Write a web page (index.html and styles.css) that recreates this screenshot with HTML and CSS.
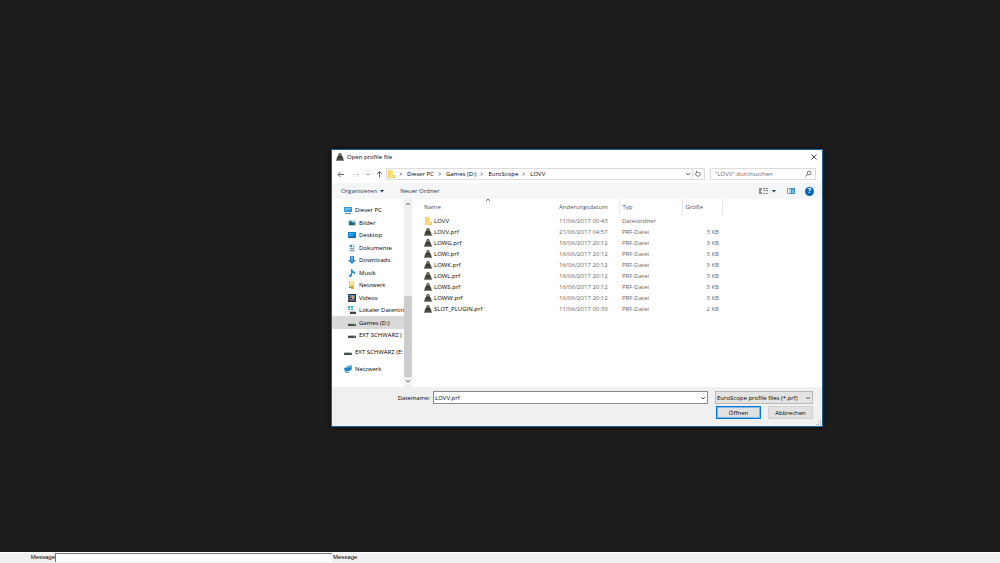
FILE: index.html
```html
<!DOCTYPE html>
<html lang="de">
<head>
<meta charset="utf-8">
<title>Open profile file</title>
<link rel="stylesheet" href="styles.css">
</head>
<body>
<svg class="defs" aria-hidden="true">
  <symbol id="tower" viewBox="0 0 8 8"><path d="M3 0h2l1 2v1l1 1 1 4H0l1-4 1-1V2z" fill="#62625a"/><path d="M3 1h2v1H3z" fill="#8e8a78"/><path d="M2 3h4v2H2z" fill="#3c3b36"/><path d="M1 5h6v2H1z" fill="#4a4a43"/><path d="M0 7h8v1H0z" fill="#8a887c"/></symbol>
  <symbol id="folder" viewBox="0 0 8 8"><path d="M1 0h5v5h1v3H1z" fill="#fbdc78"/><path d="M1 0h1v8H1z" fill="#f3cc5e"/><path d="M6 5h2v3H5z" fill="#ecc659"/><path d="M5 6h2v1H5z" fill="#fdeaa4"/></symbol>
  <symbol id="pc" viewBox="0 0 8 8"><path d="M0 1h8v5H0z" fill="#3597dc"/><path d="M1 2h6v1L1 5z" fill="#6cc3f2"/><path d="M1 7h6v1H1z" fill="#6a8ca5"/></symbol>
  <symbol id="pictures" viewBox="0 0 8 8"><path d="M0 1h8v6H0z" fill="#c8dbe7"/><path d="M1 2h6v3H1z" fill="#3a7fb5"/><path d="M1 5l2-2 2 2 1-1 1 1v1H1z" fill="#305d56"/><path d="M4 2h3v1H4z" fill="#a9dcf5"/></symbol>
  <symbol id="desk" viewBox="0 0 8 8"><path d="M0 1h8v6H0z" fill="#0c7fd6"/><path d="M1 2h6L1 6z" fill="#34a5ee"/><path d="M0 6h8v1H0z" fill="#1e5e94"/></symbol>
  <symbol id="docs" viewBox="0 0 8 8"><path d="M1 0h5l1 1v7H1z" fill="#d8e8ef"/><path d="M2 1h2v2H2z" fill="#3b91c9"/><path d="M5 2h1v1H5zM2 4h4v1H2zM2 6h4v1H2z" fill="#799dad"/></symbol>
  <symbol id="down" viewBox="0 0 8 8"><path d="M2 0h4v4h2L4 8 0 4h2z" fill="#2f83cf"/><path d="M3 0h2v5H3z" fill="#5aa9e3"/></symbol>
  <symbol id="music" viewBox="0 0 8 8"><path d="M3 0h1c0 2 3 2 3 4 0 1-1 2-1 2 0-2-1-2-2-2v2c0 2-3 3-3 1 0-1 1-2 2-2z" fill="#1594db"/></symbol>
  <symbol id="netfolder" viewBox="0 0 8 8"><path d="M1 0h5v6H1z" fill="#f6d367"/><path d="M2 0h3v4H2z" fill="#fce69c"/><path d="M1 6h5v1H1z" fill="#4c9b6a"/><path d="M3 5h3v3H3z" fill="#dfaa38"/></symbol>
  <symbol id="video" viewBox="0 0 8 8"><path d="M0 0h8v8H0z" fill="#33363d"/><path d="M2 1h5v3H2z" fill="#5489c3"/><path d="M2 5h5v2H2z" fill="#6c6386"/><path d="M4 2h2v3H4z" fill="#d09b57"/><path d="M1 1v6" stroke="#aaa" stroke-dasharray="1 1"/></symbol>
  <symbol id="windrive" viewBox="0 0 8 8"><path d="M0 0h2v2H0zM3 0h2v2H3zM0 3h2v1H0zM3 3h2v1H3z" fill="#17a8df"/><path d="M2 5h5l1 1H1z" fill="#bbb"/><path d="M2 6h6v2H2z" fill="#3e4146"/></symbol>
  <symbol id="drive" viewBox="0 0 8 8"><path d="M1 4h6l1 1H0z" fill="#bdbdbd"/><path d="M0 5h8v2H0z" fill="#4a4d4e"/><path d="M6 5h1v1H6z" fill="#73c983"/></symbol>
  <symbol id="network" viewBox="0 0 8 8"><path d="M3 1l5-1v5L4 7z" fill="#55b3e2"/><path d="M0 3l4-1v4L1 7z" fill="#2589c8"/><path d="M4 3l3-1v2L4 6z" fill="#1d78bd"/><path d="M2 7h3v1H2z" fill="#7899ab"/></symbol>
  <symbol id="chev-r" viewBox="0 0 8 8"><path d="M3 2.500L4.500 4 3 5.500" fill="none" stroke="#555" stroke-width=".9"/></symbol>
  <symbol id="chev-d" viewBox="0 0 8 8"><path d="M2 3l2 2 2-2" fill="none" stroke="#666"/></symbol>
  <symbol id="chev-u" viewBox="0 0 8 8"><path d="M2 5l2-2 2 2" fill="none" stroke="#666"/></symbol>
  <symbol id="tri" viewBox="0 0 8 8"><path d="M2 3h4L4 5.500z" fill="#1e395b"/></symbol>
</svg>
<div class="desktop">
  <main class="dialog" role="dialog" aria-labelledby="dialog-title">
    <header class="titlebar">
      <svg class="icon"><use href="#tower"/></svg>
      <h1 class="title" id="dialog-title">Open profile file</h1>
      <button class="plain close" aria-label="Schließen"><svg class="icon" viewBox="0 0 8 8"><path d="M1.500 1.500l5 5m0-5l-5 5" stroke="#222" stroke-width=".8"/></svg></button>
    </header>
    <div class="navbar">
      <button class="plain back" aria-label="Zurück"><svg class="icon" viewBox="0 0 8 8"><path d="M7 4.500H1M3.500 2L1 4.500 3.500 7" fill="none" stroke="#555" stroke-width=".9"/></svg></button>
      <button class="plain forward" aria-label="Vorwärts"><svg class="icon" viewBox="0 0 8 8"><path d="M1 4.500h6M4.500 2L7 4.500 4.500 7" fill="none" stroke="#d5d5d5" stroke-width=".9"/></svg></button>
      <button class="plain recent" aria-label="Zuletzt besucht"><svg class="icon" viewBox="0 0 8 8"><path d="M2.500 3.500L4 5l1.500-1.500" fill="none" stroke="#888"/></svg></button>
      <button class="plain up" aria-label="Nach oben"><svg class="icon" viewBox="0 0 8 8"><path d="M4.500 7.500V1.500M2 4l2.500-2.500L7 4" fill="none" stroke="#555" stroke-width=".9"/></svg></button>
      <nav class="address" aria-label="Pfad">
        <svg class="icon"><use href="#folder"/></svg>
        <svg class="icon sep"><use href="#chev-r"/></svg><a class="crumb" href="#">Dieser PC</a>
        <svg class="icon sep"><use href="#chev-r"/></svg><a class="crumb" href="#">Games (D:)</a>
        <svg class="icon sep"><use href="#chev-r"/></svg><a class="crumb" href="#">EuroScope</a>
        <svg class="icon sep"><use href="#chev-r"/></svg><a class="crumb" href="#">LOVV</a>
        <button class="plain history" aria-label="Verlauf"><svg class="icon"><use href="#chev-d"/></svg></button>
        <button class="plain refresh" aria-label="Aktualisieren"><svg class="icon" viewBox="0 0 8 8"><path d="M5.500 2.200A2.300 2.300 0 1 1 2.500 2.200M2.500.8v1.700h2" fill="none" stroke="#666" stroke-width=".9"/></svg></button>
      </nav>
      <div class="search">
        <input class="search-input" type="text" aria-label="Suchen" placeholder="&quot;LOVV&quot; durchsuchen">
        <svg class="icon" viewBox="0 0 8 8"><circle cx="5" cy="3" r="1.800" fill="none" stroke="#555" stroke-width=".8"/><path d="M3.700 4.300L1.500 6.500" stroke="#555"/></svg>
      </div>
    </div>
    <div class="toolbar">
      <button class="plain tool">Organisieren <svg class="icon"><use href="#tri"/></svg></button>
      <button class="plain tool">Neuer Ordner</button>
      <button class="plain tool view" aria-label="Ansicht"><svg class="icon wide" viewBox="0 0 10 8"><path d="M1 1h3v2H1zM1 3h2v2H1zM1 5h3v2H1z" fill="#8a8f94"/><path d="M5 1h2v1H5zM8 1h2v1H8zM5 3h2v1H5zM8 3h2v1H8zM5 6h2v1H5zM8 6h2v1H8z" fill="#888"/></svg><svg class="icon"><use href="#tri"/></svg></button>
      <button class="plain tool" aria-label="Vorschaufenster"><svg class="icon" viewBox="0 0 8 8"><path d="M.5 1.500h7v5h-7zM3 1v6" fill="#fff" stroke="#7e95a5"/><path d="M4 1h4v6H4z" fill="#3498dc"/><path d="M5 3h2v3H5z" fill="#73bcec"/></svg></button>
      <button class="plain tool help" aria-label="Hilfe">?</button>
    </div>
    <div class="content">
      <nav class="sidebar" aria-label="Ordner">
        <div class="tree">
          <a class="node" href="#"><svg class="icon"><use href="#pc"/></svg>Dieser PC</a>
          <a class="node child" href="#"><svg class="icon"><use href="#pictures"/></svg>Bilder</a>
          <a class="node child" href="#"><svg class="icon"><use href="#desk"/></svg>Desktop</a>
          <a class="node child" href="#"><svg class="icon"><use href="#docs"/></svg>Dokumente</a>
          <a class="node child" href="#"><svg class="icon"><use href="#down"/></svg>Downloads</a>
          <a class="node child" href="#"><svg class="icon"><use href="#music"/></svg>Musik</a>
          <a class="node child" href="#"><svg class="icon"><use href="#netfolder"/></svg>Netzwerk</a>
          <a class="node child" href="#"><svg class="icon"><use href="#video"/></svg>Videos</a>
          <a class="node child" href="#"><svg class="icon"><use href="#windrive"/></svg>Lokaler Datenträ</a>
          <a class="node child selected" href="#"><svg class="icon"><use href="#drive"/></svg>Games (D:)</a>
          <a class="node child" href="#"><svg class="icon"><use href="#drive"/></svg>EXT SCHWARZ (</a>
        </div>
        <a class="node" href="#"><svg class="icon"><use href="#drive"/></svg>EXT SCHWARZ (E:</a>
        <a class="node" href="#"><svg class="icon"><use href="#network"/></svg>Netzwerk</a>
      </nav>
      <div class="scrollbar">
        <svg class="icon"><use href="#chev-u"/></svg>
        <div class="track"><div class="thumb"></div></div>
        <svg class="icon"><use href="#chev-d"/></svg>
      </div>
      <div class="files">
        <table class="list">
          <colgroup><col class="c-name"><col class="c-date"><col class="c-type"><col class="c-size"><col></colgroup>
          <thead><tr><th>Name<svg class="icon sort"><use href="#chev-u"/></svg></th><th>Änderungsdatum</th><th>Typ</th><th>Größe</th><th></th></tr></thead>
          <tbody>
            <tr><td><span class="file"><svg class="icon"><use href="#folder"/></svg>LOVV</span></td><td>11/06/2017 00:43</td><td>Dateiordner</td><td></td><td></td></tr>
            <tr><td><span class="file"><svg class="icon"><use href="#tower"/></svg>LOVV.prf</span></td><td>21/06/2017 04:57</td><td>PRF-Datei</td><td>3 KB</td><td></td></tr>
            <tr><td><span class="file"><svg class="icon"><use href="#tower"/></svg>LOWG.prf</span></td><td>16/06/2017 20:12</td><td>PRF-Datei</td><td>3 KB</td><td></td></tr>
            <tr><td><span class="file"><svg class="icon"><use href="#tower"/></svg>LOWI.prf</span></td><td>16/06/2017 20:12</td><td>PRF-Datei</td><td>3 KB</td><td></td></tr>
            <tr><td><span class="file"><svg class="icon"><use href="#tower"/></svg>LOWK.prf</span></td><td>16/06/2017 20:12</td><td>PRF-Datei</td><td>3 KB</td><td></td></tr>
            <tr><td><span class="file"><svg class="icon"><use href="#tower"/></svg>LOWL.prf</span></td><td>16/06/2017 20:12</td><td>PRF-Datei</td><td>3 KB</td><td></td></tr>
            <tr><td><span class="file"><svg class="icon"><use href="#tower"/></svg>LOWS.prf</span></td><td>16/06/2017 20:12</td><td>PRF-Datei</td><td>3 KB</td><td></td></tr>
            <tr><td><span class="file"><svg class="icon"><use href="#tower"/></svg>LOWW.prf</span></td><td>16/06/2017 20:12</td><td>PRF-Datei</td><td>3 KB</td><td></td></tr>
            <tr><td><span class="file"><svg class="icon"><use href="#tower"/></svg>SLOT_PLUGIN.prf</span></td><td>11/06/2017 00:39</td><td>PRF-Datei</td><td>2 KB</td><td></td></tr>
          </tbody>
        </table>
      </div>
    </div>
    <footer class="footer">
      <div class="name-row">
        <label class="name-label" for="filename">Dateiname:</label>
        <div class="combo"><input class="combo-input" id="filename" type="text" value="LOVV.prf"><svg class="icon"><use href="#chev-d"/></svg></div>
        <div class="filter"><select class="filter-select" aria-label="Dateityp"><option>EuroScope profile files (*.prf)</option></select><svg class="icon arrow"><use href="#chev-d"/></svg></div>
      </div>
      <div class="actions"><button class="btn primary">Öffnen</button><button class="btn">Abbrechen</button></div>
      <svg class="grip" viewBox="0 0 6 6"><path d="M4 0h1v1H4zM2 2h1v1H2zM4 2h1v1H4zM0 4h1v1H0zM2 4h1v1H2zM4 4h1v1H4z" fill="#aaa"/></svg>
    </footer>
  </main>
</div>
<div class="statusbar">
  <label class="msg first" for="message">Message</label>
  <input class="msg-input" id="message" type="text">
  <span class="msg">Message</span>
</div>
</body>
</html>
```
FILE: styles.css
```css
* { box-sizing: border-box; }
body {
  margin: 0;
  min-height: 100vh;
  display: flex;
  flex-direction: column;
  background: #1d1d1d;
  color: #000;
  font: 6px/10px "Open Sans", "Noto Sans", sans-serif;
}
input, select, button { font: inherit; color: inherit; }
a { color: inherit; text-decoration: none; }
.defs { position: absolute; width: 0; height: 0; }
.icon { display: block; flex: none; width: 8px; height: 8px; }
.icon.wide { width: 10px; }
.plain { display: flex; align-items: center; padding: 0; border: 0; background: none; }

.desktop { flex: 1; position: relative; }
.dialog {
  position: absolute;
  top: 149px;
  left: 331px;
  right: 177px;
  border: 1px solid #17629b;
  background: #fff;
  box-shadow: 0 1px 6px #0b0b0b;
}

.titlebar { display: flex; align-items: center; height: 14px; padding: 0 4px; }
.title { margin: 0 0 0 3px; font-size: 6px; font-weight: 400; }
.close { margin-left: auto; }

.navbar { display: flex; align-items: center; height: 19px; padding: 0 6px 0 5px; }
.forward { margin-left: 7px; }
.recent { margin-left: 4px; }
.up { margin: 0 3px; }
.address {
  flex: 1;
  display: flex;
  align-items: center;
  height: 12px;
  border: 1px solid #dcdcdc;
}
.sep { margin: 0 2px; }
.crumb { white-space: nowrap; }
.history { margin-left: auto; }
.refresh { height: 10px; padding: 0 2px 0 1px; border-left: 1px solid #dcdcdc; }
.search {
  flex: 0 0 106px;
  min-width: 0;
  display: flex;
  align-items: center;
  height: 12px;
  margin-left: 5px;
  padding-right: 3px;
  border: 1px solid #dcdcdc;
}
.search-input { flex: 1; min-width: 0; width: 0; height: 10px; padding: 0 4px; border: 0; background: none; }
.search-input::placeholder { color: #666; opacity: 1; }

.toolbar {
  display: flex;
  align-items: center;
  gap: 14px;
  height: 16px;
  padding: 0 8px 0 9px;
  background: #f4f6f8;
  color: #1e395b;
}
.tool { gap: 1px; }
.view { gap: 2px; margin-left: auto; margin-right: -5px; }
.help {
  justify-content: center;
  width: 9px;
  height: 9px;
  margin-left: -4px;
  border-radius: 50%;
  background: #0867b9;
  color: #fff;
  font-size: 7px;
  font-weight: 700;
}

.content { display: flex; height: 188px; }
.sidebar { flex: 0 0 72px; min-width: 0; padding-top: 5px; overflow: hidden; }
.tree { display: grid; grid-auto-rows: 12px 13px; }
.node {
  display: flex;
  align-items: center;
  gap: 3px;
  height: 100%;
  padding-left: 12px;
  white-space: nowrap;
}
.child { padding-left: 16px; }
.selected { background: #d9d9d9; }
.sidebar > .node { height: 12px; margin-top: 5px; }
.scrollbar { flex: 0 0 8px; display: flex; flex-direction: column; padding: 1px 0 2px; background: #f0f0f0; }
.track { flex: 1; display: flex; align-items: flex-end; }
.thumb { width: 100%; height: 48%; background: #cdcdcd; }

.files { flex: 1; min-width: 0; padding-left: 9px; }
.list { width: 100%; table-layout: fixed; border-collapse: collapse; color: #5f5f5f; }
.c-name { width: 135px; }
.c-date, .c-type { width: 63px; }
.c-size { width: 40px; }
.list th { position: relative; height: 16px; padding: 0 3px; border-right: 1px solid #e5e5e5; color: #43566f; font-weight: 400; text-align: left; }
.list th:first-child, .list th:last-child { border-right: 0; }
.sort { position: absolute; top: -3px; left: 63px; }
.list td { height: 11px; padding: 0 3px; white-space: nowrap; }
.list td:nth-child(4) { text-align: right; }
.file { display: flex; align-items: center; gap: 2px; color: #000; }

.footer { position: relative; padding: 4px 9px 7px 8px; background: #f0f0f0; }
.name-row { display: flex; align-items: center; }
.name-label { flex: 0 0 93px; padding-right: 3px; text-align: right; }
.combo {
  flex: 1;
  min-width: 0;
  display: flex;
  align-items: center;
  height: 13px;
  border: 1px solid #8a8a8a;
  background: #fff;
}
.combo-input { flex: 1; min-width: 0; height: 11px; padding: 0 1px; border: 0; background: none; }
.filter { position: relative; flex: 0 0 98px; margin-left: 7px; }
.filter-select {
  display: block;
  width: 100%;
  height: 13px;
  padding: 0 1px;
  border: 1px solid #b8b8b8;
  border-radius: 0;
  background: #e3e3e3;
  appearance: none;
}
.arrow { position: absolute; top: 3px; right: 1px; pointer-events: none; }
.actions { display: flex; justify-content: flex-end; gap: 7px; margin-top: 2px; }
.btn { width: 45px; height: 13px; padding: 0; border: 1px solid #cfcfcf; background: #e1e1e1; }
.primary { border: 1px solid #0078d7; outline: 1px solid #7db8e6; outline-offset: -2px; }
.grip { position: absolute; right: 0; bottom: 0; width: 6px; height: 6px; }

.statusbar { display: flex; height: 11px; border-top: 1px solid #fff; background: #f0f0f0; }
.msg { font-family: "Liberation Sans", sans-serif; line-height: 9px; }
.first { flex: 0 0 55px; text-align: right; }
.msg-input {
  flex: 0 0 277px;
  height: 9px;
  margin-right: 1px;
  padding: 0;
  border: 0;
  border-top: 1px solid #777;
  border-left: 1px solid #777;
  background: #fff;
}
```
